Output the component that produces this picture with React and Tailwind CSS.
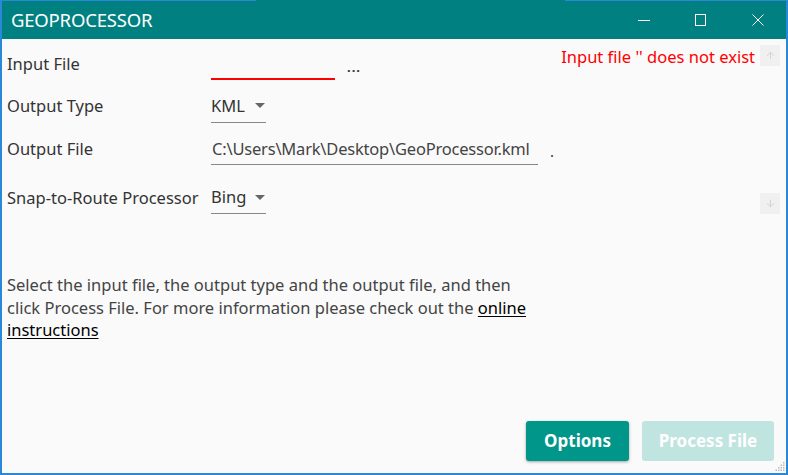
import { ArrowUp, ArrowDown } from 'lucide-react';

const font = { fontFamily: '"Noto Sans", "Open Sans", sans-serif' };

function Caret() {
  return (
    <svg width="10" height="6" viewBox="0 0 10 6" className="ml-auto mr-[1px]">
      <path d="M0 0 L10 0 L5 5 Z" fill="#666" />
    </svg>
  );
}

function Row({ label, children, className }) {
  return (
    <div className={`flex items-center ${className}`}>
      <div className="w-[204px] shrink-0 text-[16.5px] text-[#333] whitespace-nowrap">{label}</div>
      {children}
    </div>
  );
}

export default function App() {
  return (
    <div
      className="relative w-[788px] h-[475px] bg-[#fafafa] border-x-2 border-b-2 border-[#2b88d8] flex flex-col"
      style={font}
    >
      <div className="flex h-[1px] bg-[#008080]">
        <div className="w-[254px] bg-[#2b88d8]" />
        <div className="flex-1" />
        <div className="w-[221px] bg-[#2b88d8]" />
      </div>
      <div className="h-[38px] bg-[#008080] flex items-center text-white">
        <div className="pl-[9px] text-[18.5px] tracking-[-0.2px] flex-1">GEOPROCESSOR</div>
        <div className="flex items-center h-full">
          <div className="w-[57px] flex justify-center">
            <div className="w-[12px] h-[1px] bg-white" />
          </div>
          <div className="w-[57px] flex justify-center">
            <div className="w-[11px] h-[12px] border border-white" />
          </div>
          <div className="w-[57px] flex justify-center">
            <svg width="12" height="12" viewBox="0 0 12 12">
              <path d="M0.5 0.5 L11.5 11.5 M11.5 0.5 L0.5 11.5" stroke="white" strokeWidth="1" />
            </svg>
          </div>
        </div>
      </div>

      <div className="flex h-[176px] pl-[5px] pr-[6px]">
        <div className="flex-1 flex">
          <div className="flex flex-col">
            <Row label="Input File" className="mt-[9px] h-[32px]">
              <div className="w-[124px] h-[32px] border-b-2 border-[#ff0000]" />
              <div className="ml-[12px] text-[13px] text-[#333] font-bold tracking-[1px] leading-none pt-[6px]">...</div>
            </Row>
            <Row label="Output Type" className="mt-[10px] h-[33px]">
              <div className="w-[55px] h-[33px] border-b border-[#888] flex items-center text-[16.5px] text-[#333]">
                KML
                <Caret />
              </div>
            </Row>
            <Row label="Output File" className="mt-[11px] h-[31px]">
              <div className="w-[327px] h-[31px] border-b border-[#888] flex items-center text-[16.5px] text-[#444] whitespace-nowrap overflow-hidden pl-[1px] tracking-[-0.2px]">
                C:\Users\Mark\Desktop\GeoProcessor.kml
              </div>
              <div className="ml-[12px] text-[15px] text-[#333] leading-none pt-[4px]">.</div>
            </Row>
            <Row label="Snap-to-Route Processor" className="mt-[17px] h-[32px]">
              <div className="w-[55px] h-[32px] border-b border-[#888] flex items-center text-[16.5px] text-[#333]">
                Bing
                <Caret />
              </div>
            </Row>
          </div>
          <div className="ml-auto mt-[7px] text-[16.5px] text-[#ff0000] leading-[22px] whitespace-nowrap">
            Input file '' does not exist
          </div>
        </div>
        <div className="w-[20px] ml-[5px] flex flex-col justify-between pt-[6px] pb-[1px]">
          <div className="h-[21px] bg-[#f0f0f0] flex items-center justify-center">
            <ArrowUp size={11} color="#d0d0d0" strokeWidth={2} />
          </div>
          <div className="h-[21px] bg-[#f0f0f0] flex items-center justify-center">
            <ArrowDown size={11} color="#d0d0d0" strokeWidth={2} />
          </div>
        </div>
      </div>

      <p className="pl-[5px] mt-[59px] text-[16.5px] leading-[22.5px] text-[#444] whitespace-nowrap">
        Select the input file, the output type and the output file, and then
        <br />
        click Process File. For more information please check out the{' '}
        <span className="underline text-black underline-offset-2">online</span>
        <br />
        <span className="underline text-black underline-offset-2">instructions</span>
      </p>

      <div className="mt-auto flex justify-end gap-[13px] pr-[12px] pb-[12px]">
        <button className="w-[103px] h-[40px] rounded-[3px] bg-[#00968a] text-white text-[17px] font-bold shadow-[0_1px_3px_rgba(0,0,0,0.35)]">
          Options
        </button>
        <button className="w-[132px] h-[40px] rounded-[3px] bg-[#c0e4df] text-white text-[17px] font-bold">
          Process File
        </button>
      </div>

      <svg className="absolute right-[1px] bottom-[1px]" width="12" height="12" viewBox="0 0 12 12">
        {[
          [10, 2], [10, 4.5], [7.5, 4.5], [10, 7], [7.5, 7], [5, 7], [10, 9.5], [7.5, 9.5], [5, 9.5], [2.5, 9.5],
        ].map(([x, y], i) => (
          <rect key={i} x={x} y={y} width="1.5" height="1.5" fill="#bbb" />
        ))}
      </svg>
    </div>
  );
}
